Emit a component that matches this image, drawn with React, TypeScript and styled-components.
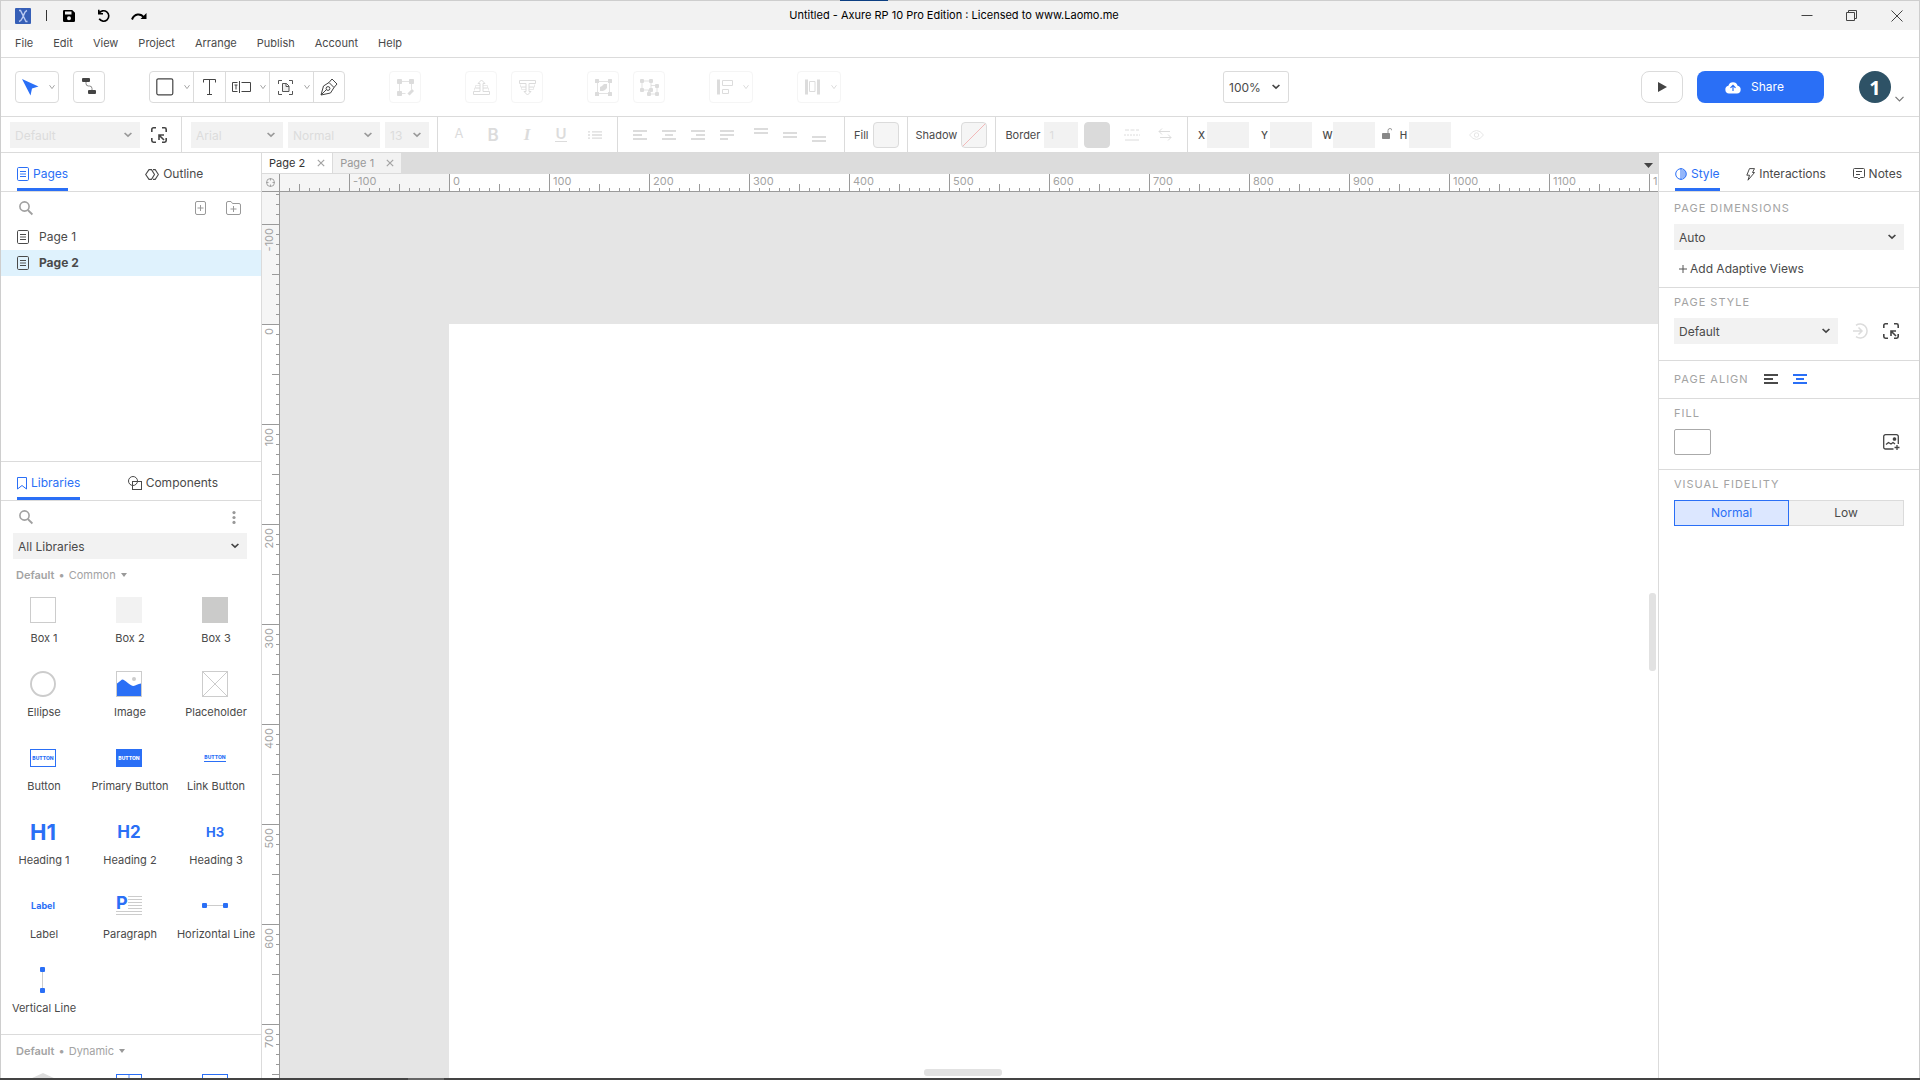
import React, { useEffect, useState } from "react";
import styled, { createGlobalStyle, css } from "styled-components";

const c = {
  text: "#4a4a4a",
  muted: "#a3a3a3",
  faint: "#dcdcdc",
  line: "#dbdbdb",
  field: "#f2f2f2",
  blue: "#2a6ff6",
  tick: "#9a9a9a",
};

const GlobalStyle = createGlobalStyle`
  *, *::before, *::after { box-sizing: border-box; }
  html, body, #root { height: 100%; margin: 0; }
  body { font-family: Inter, "Liberation Sans", sans-serif; font-size: 12px; line-height: 16px; color: ${c.text}; background: #fff; overflow: hidden; }
  button, input, select { font: inherit; color: inherit; margin: 0; padding: 0; border: 0; background: none; border-radius: 0; }
  svg { display: block; flex: none; }
`;

/* ---------- window frame ---------- */

const Window = styled.div`
  display: flex;
  flex-direction: column;
  height: 100vh;
`;
const TopEdge = styled.div`
  display: flex;
  justify-content: center;
  flex: none;
  height: 1px;
  background: #cecece;
`;
const TopMark = styled.span`
  width: 48px;
  margin-right: 192px;
  background: #0c3f83;
`;
const Frame = styled.div`
  display: flex;
  flex-direction: column;
  flex: 1;
  min-height: 0;
  border: solid #cecece;
  border-width: 0 1px;
`;
const BottomEdge = styled.div`
  flex: none;
  height: 2px;
  padding-left: 408px;
  background: #444;
`;
const BottomMark = styled.div`
  width: 36px;
  height: 2px;
  background: #666;
`;

const TitleBar = styled.header`
  display: grid;
  grid-template-columns: 1fr auto 1fr;
  align-items: center;
  flex: none;
  height: 29px;
  padding: 0 16px 0 4px;
  background: #f2f2f2;
`;
const QuickActions = styled.div`
  display: flex;
  align-items: center;
  padding-left: 10px;
`;
const QuickDivider = styled.span`
  width: 1px;
  height: 11px;
  margin: 0 16px 0 15px;
  background: #333;
`;
const QuickButton = styled.button`
  display: grid;
  place-items: center;
  width: 12px;
  height: 16px;
  margin-right: 22px;
  color: #000;
`;
const WindowTitle = styled.h1`
  margin: 0;
  padding-bottom: 2px;
  font-size: 11px;
  font-weight: 400;
  color: #000;
`;
const WindowControls = styled.div`
  display: flex;
  justify-content: flex-end;
  gap: 33px;
`;
const WindowButton = styled.button`
  width: 12px;
  height: 12px;
  color: #444;
`;

const MenuBar = styled.nav`
  display: flex;
  align-items: center;
  gap: 20px;
  flex: none;
  height: 28px;
  padding: 0 14px 2px;
  border-bottom: 1px solid ${c.line};
`;
const MenuItem = styled.button`
  font-size: 11px;
`;

/* ---------- main toolbar ---------- */

const Toolbar = styled.div`
  display: flex;
  align-items: center;
  flex: none;
  height: 59px;
  padding: 0 15px 0 14px;
  border-bottom: 1px solid ${c.line};
`;
const ToolSet = styled.div`
  display: flex;
  gap: 14px;
  margin-right: 44px;
`;
const ToolButton = styled.button<{ $caret?: boolean; $off?: boolean }>`
  display: flex;
  align-items: center;
  justify-content: ${(p) => (p.$caret ? "space-between" : "center")};
  width: ${(p) => (p.$caret ? 44 : 32)}px;
  height: 32px;
  padding: ${(p) => (p.$caret ? "0 3px 0 6px" : "0")};
  border: 1px solid ${(p) => (p.$off ? "#f5f5f5" : c.line)};
  border-radius: 4px;
  color: ${(p) => (p.$off ? c.faint : c.text)};
`;
const JoinedTools = styled.div`
  display: flex;
  border: 1px solid ${c.line};
  border-radius: 4px;
  ${ToolButton} {
    height: 30px;
    border-width: 0 0 0 1px;
    border-radius: 0;
  }
  ${ToolButton}:first-child {
    width: 43px;
    border-left: 0;
  }
  ${ToolButton}:last-child {
    width: 31px;
  }
`;
const ZoomSlot = styled.div`
  margin: 0 auto;
  padding-right: 14px;
`;
const PlayButton = styled.button`
  display: grid;
  place-items: center;
  width: 42px;
  height: 32px;
  margin-right: 14px;
  border: 1px solid ${c.line};
  border-radius: 8px;
`;
const ShareButton = styled.button`
  display: flex;
  align-items: center;
  justify-content: center;
  gap: 10px;
  width: 127px;
  height: 32px;
  margin-right: 35px;
  padding-right: 12px;
  border-radius: 8px;
  background: ${c.blue};
  color: #fff;
  font-size: 12px;
`;
const Account = styled.button`
  display: flex;
  align-items: center;
  gap: 4px;
  svg {
    align-self: flex-end;
    margin-bottom: 1px;
  }
`;
const Avatar = styled.span`
  display: grid;
  place-items: center;
  width: 32px;
  height: 32px;
  border-radius: 50%;
  background: #2e5266;
  color: #fff;
  font: 700 20px "Noto Sans", sans-serif;
`;

/* ---------- fields ---------- */

const SelectBox = styled.span<{ $w: string; $off?: boolean; $outlined?: boolean }>`
  display: inline-grid;
  align-items: center;
  flex: none;
  width: ${(p) => p.$w};
  height: ${(p) => (p.$outlined ? 32 : 26)}px;
  border: ${(p) => (p.$outlined ? `1px solid ${c.line}` : "0")};
  border-radius: ${(p) => (p.$outlined ? 3 : 0)}px;
  background: ${(p) => (p.$outlined ? "#fff" : c.field)};
  select {
    grid-area: 1 / 1;
    width: 100%;
    height: 100%;
    padding: 2px 24px 0 5px;
    appearance: none;
    opacity: 1;
    font-size: 12px;
    color: ${(p) => (p.$off ? c.faint : c.text)};
  }
  svg {
    grid-area: 1 / 1;
    justify-self: end;
    margin-right: 8px;
    pointer-events: none;
    color: ${(p) => (p.$off ? "#999" : "#444")};
  }
`;

function Select(p: { label: string; value: string; w: string; off?: boolean; outlined?: boolean }) {
  return (
    <SelectBox $w={p.w} $off={p.off} $outlined={p.outlined}>
      <select aria-label={p.label} disabled={p.off} defaultValue={p.value}>
        <option>{p.value}</option>
      </select>
      <svg width="8" height="6" viewBox="0 0 8 6" fill="none" stroke="currentColor" strokeWidth="1.7">
        <path d="M.6 1 4 4.2 7.4 1" />
      </svg>
    </SelectBox>
  );
}

/* ---------- format bar ---------- */

const FormatBar = styled.div`
  display: flex;
  flex: none;
  height: 36px;
  border-bottom: 1px solid ${c.line};
`;
const Group = styled.div<{ $pad: string; $gap?: number; $last?: boolean }>`
  display: flex;
  align-items: center;
  gap: ${(p) => p.$gap ?? 0}px;
  padding: ${(p) => p.$pad};
  border-right: ${(p) => (p.$last ? 0 : 1)}px solid ${c.line};
`;
const FormatButton = styled.button<{ $w: number }>`
  display: grid;
  place-items: center;
  width: ${(p) => p.$w}px;
  height: 26px;
  color: ${c.faint};
`;
const Spacer = styled.span<{ $w: number }>`
  flex: none;
  width: ${(p) => p.$w}px;
`;
const Glyph = styled.span<{ $kind: "b" | "i" | "u" | "a" }>`
  font-size: ${(p) => (p.$kind === "a" ? 13 : 17)}px;
  line-height: 18px;
  ${(p) => p.$kind === "a" && css`padding-bottom: 3px;`}
  ${(p) => p.$kind === "b" && css`font-weight: 600;`}
  ${(p) => p.$kind === "i" && css`font-family: "Liberation Serif", serif; font-style: italic; font-weight: 700;`}
  ${(p) => p.$kind === "u" && css`font-size: 15px; font-weight: 600; line-height: 13px; border-bottom: 1px solid currentColor; padding-bottom: 1px;`}
`;
const SmallLabel = styled.label`
  display: flex;
  align-items: center;
  gap: 4px;
  font-size: 11px;
`;
const Swatch = styled.button<{ $w?: number; $fill: string; $edge?: string; $r?: number }>`
  display: block;
  width: ${(p) => p.$w ?? 26}px;
  height: 26px;
  border: 1px solid ${(p) => p.$edge ?? c.line};
  border-radius: ${(p) => p.$r ?? 4}px;
  background: ${(p) => p.$fill};
`;
const NumberInput = styled.input<{ $w: number }>`
  width: ${(p) => p.$w}px;
  height: 26px;
  padding: 0 5px;
  background: ${c.field};
  &::placeholder { color: ${c.faint}; opacity: 1; }
`;
const AxisField = styled.label`
  display: grid;
  grid-template-columns: 12px 42px;
  align-items: center;
  font-size: 10px;
  font-weight: 500;
  text-align: center;
`;

/* ---------- side panels ---------- */

const Body = styled.div`
  display: flex;
  flex: 1;
  min-height: 0;
`;
const Sidebar = styled.aside<{ $side: "left" | "right" }>`
  display: flex;
  flex-direction: column;
  flex: none;
  width: 261px;
  border: 0 solid ${c.line};
  border-${(p) => (p.$side === "left" ? "right" : "left")}-width: 1px;
`;
const PagesPane = styled.section`
  height: 309px;
  border-bottom: 1px solid ${c.line};
`;
const LibraryPane = styled.section`
  flex: 1;
  min-height: 0;
  overflow: hidden;
`;
const TabRow = styled.div<{ $spread?: boolean }>`
  display: grid;
  grid-template-columns: ${(p) => (p.$spread ? "auto auto auto" : "1fr 1fr")};
  justify-content: ${(p) => (p.$spread ? "space-between" : "stretch")};
  height: 39px;
  padding: 0 17px 0 16px;
  border-bottom: 1px solid ${c.line};
`;
const PanelTab = styled.button<{ $on?: boolean; $center?: boolean }>`
  display: flex;
  align-items: center;
  gap: 4px;
  justify-self: ${(p) => (p.$center ? "center" : "start")};
  height: 38px;
  margin-right: ${(p) => (p.$center ? 26 : 0)}px;
  padding-top: 7px;
  border-bottom: 3px solid ${(p) => (p.$on ? c.blue : "transparent")};
  color: ${(p) => (p.$on ? c.blue : c.text)};
  font-size: 12px;
`;
const SearchRow = styled.div`
  display: flex;
  align-items: center;
  height: 32px;
  padding: 0 19px 0 17px;
  color: ${c.muted};
`;
const SearchInput = styled.input`
  flex: 1;
  min-width: 0;
  padding: 0 8px;
  outline: 0;
`;
const IconButton = styled.button<{ $w?: number }>`
  display: grid;
  place-items: center;
  width: ${(p) => p.$w ?? 16}px;
  height: 26px;
`;
const PageCenter = styled(IconButton)`
  color: ${c.blue};
`;
const PageList = styled.ul`
  margin: 0;
  padding: 0;
  list-style: none;
`;
const PageRow = styled.button<{ $on?: boolean }>`
  display: flex;
  align-items: center;
  gap: 10px;
  width: 100%;
  height: 26px;
  padding: 0 16px;
  background: ${(p) => (p.$on ? "#dff2fd" : "transparent")};
  font-weight: ${(p) => (p.$on ? 700 : 400)};
`;
const LibrarySelect = styled.div`
  padding: 0 14px 0 12px;
`;
const LibrarySection = styled.section`
  border-bottom: 1px solid ${c.line};
`;
const LibraryHeading = styled.button`
  display: flex;
  align-items: center;
  gap: 4px;
  height: 31px;
  padding: 0 15px;
  color: ${c.muted};
  font-size: 11px;
  b { font-weight: 600; }
  svg { margin-left: 1px; }
`;
const WidgetGrid = styled.div`
  display: grid;
  grid-template-columns: repeat(3, 86px);
`;
const Widget = styled.button`
  display: flex;
  flex-direction: column;
  align-items: center;
  gap: 7px;
  height: 74px;
  padding-top: 7px;
  font-size: 11px;
  white-space: nowrap;
`;
const WidgetIcon = styled.span`
  display: grid;
  place-items: center;
  width: 26px;
  height: 26px;
  margin-right: 2px;
  color: ${c.blue};
`;
const HeadingGlyph = styled.span<{ $size: number }>`
  font-size: ${(p) => p.$size}px;
  font-weight: 700;
  line-height: 26px;
`;
const ButtonGlyph = styled.span<{ $kind: "outline" | "solid" | "link" }>`
  display: grid;
  place-items: center;
  font-size: 5px;
  font-weight: 800;
  line-height: 6px;
  ${(p) =>
    p.$kind === "link"
      ? css`border-bottom: 1px solid ${c.blue}; padding-bottom: 1px;`
      : css`width: 26px; height: 18px; border: 1px solid ${c.blue};`}
  ${(p) => p.$kind === "solid" && css`background: ${c.blue}; color: #fff;`}
`;
const ParagraphGlyph = styled.span`
  display: grid;
  width: 26px;
  height: 26px;
  b { grid-area: 1 / 1; font-size: 18px; line-height: 20px; text-align: left; }
  svg { grid-area: 1 / 1; }
`;

/* ---------- inspector ---------- */

const Section = styled.section<{ $pad: string }>`
  padding: ${(p) => p.$pad};
  border-bottom: 1px solid ${c.line};
  &:last-child { border-bottom: 0; }
`;
const SectionTitle = styled.h2<{ $inline?: boolean }>`
  margin: 0 0 ${(p) => (p.$inline ? 0 : 8)}px;
  color: ${c.muted};
  font-size: 11px;
  font-weight: 400;
  line-height: 16px;
  letter-spacing: 1px;
`;
const Row = styled.div<{ $gap?: number; $spread?: boolean }>`
  display: flex;
  align-items: center;
  gap: ${(p) => p.$gap ?? 0}px;
  justify-content: ${(p) => (p.$spread ? "space-between" : "flex-start")};
`;
const AddViews = styled.button`
  display: flex;
  align-items: center;
  gap: 3px;
  height: 26px;
  margin-top: 6px;
  padding-left: 5px;
`;
const Segments = styled.div`
  display: grid;
  grid-template-columns: 1fr 1fr;
`;
const Segment = styled.button<{ $on?: boolean }>`
  height: 26px;
  border: 1px solid ${(p) => (p.$on ? c.blue : c.line)};
  border-left-width: ${(p) => (p.$on ? 1 : 0)}px;
  background: ${(p) => (p.$on ? "#dce7ff" : c.field)};
  color: ${(p) => (p.$on ? c.blue : c.text)};
`;

/* ---------- canvas ---------- */

const Workspace = styled.main`
  display: flex;
  flex-direction: column;
  flex: 1;
  min-width: 0;
`;
const DocTabs = styled.div`
  display: flex;
  flex: none;
  height: 21px;
  background: #dcdcdc;
`;
const DocTab = styled.div<{ $on?: boolean }>`
  display: flex;
  align-items: center;
  gap: 12px;
  padding: 0 7px;
  border: solid ${c.line};
  border-width: 0 ${(p) => (p.$on ? 1 : 0)}px 1px 0;
  background: ${(p) => (p.$on ? "#fff" : "#f2f2f2")};
  color: ${(p) => (p.$on ? "#333" : "#999")};
  font-size: 11px;
  line-height: 14px;
`;
const CloseTab = styled.button`
  color: ${c.muted};
`;
const TabMenu = styled.button`
  display: flex;
  margin-left: auto;
  padding: 10px 5px 0;
`;
const RulerRow = styled.div`
  display: flex;
  flex: none;
  height: 18px;
`;
const Corner = styled.button`
  display: grid;
  place-items: center;
  flex: none;
  width: 18px;
  border: solid ${c.tick};
  border-width: 0 1px 1px 0;
  background: #f5f5f5;
  color: ${c.muted};
`;
const RulerX = styled.div`
  display: flex;
  flex: 1;
  min-width: 0;
  overflow: hidden;
  border-bottom: 1px solid ${c.tick};
`;
const RulerY = styled.div`
  flex: none;
  width: 18px;
  overflow: hidden;
  border-right: 1px solid ${c.tick};
`;
const TrackX = styled.div`
  display: flex;
  margin-left: -31px;
`;
const TrackY = styled.div`
  margin-top: -68px;
`;
const MarkX = styled.span<{ $neg: boolean }>`
  flex: none;
  width: 100px;
  height: 17px;
  padding-left: 3px;
  border-left: 1px solid ${c.tick};
  color: ${c.muted};
  font-size: 11px;
  line-height: 14px;
  background:
    linear-gradient(${c.tick}, ${c.tick}) 49px 100% / 1px 7px no-repeat,
    repeating-linear-gradient(to right, transparent 0 9px, ${c.tick} 9px 10px) 0 100% / 99px 3px no-repeat,
    ${(p) => (p.$neg ? "#f5f5f5" : "#fff")};
`;
const MarkY = styled.span<{ $neg: boolean }>`
  display: flex;
  align-items: flex-start;
  justify-content: flex-start;
  height: 100px;
  padding-top: 3px;
  border-top: 1px solid ${c.tick};
  color: ${c.muted};
  font-size: 11px;
  line-height: 14px;
  background:
    linear-gradient(${c.tick}, ${c.tick}) 100% 49px / 7px 1px no-repeat,
    repeating-linear-gradient(to bottom, transparent 0 9px, ${c.tick} 9px 10px) 100% 0 / 3px 99px no-repeat,
    ${(p) => (p.$neg ? "#f5f5f5" : "#fff")};
`;
const Upward = styled.span`
  writing-mode: vertical-rl;
  transform: rotate(180deg);
`;
const CanvasRow = styled.div`
  display: flex;
  flex: 1;
  min-height: 0;
`;
const Canvas = styled.div`
  position: relative;
  flex: 1;
  display: flex;
  min-width: 0;
  padding: 132px 0 0 169px;
  background: #e5e5e5;
`;
const Artboard = styled.div`
  flex: 1;
  background: #fff;
`;
const Thumb = styled.span<{ $axis: "x" | "y" }>`
  position: absolute;
  border-radius: 3px;
  background: #e2e2e2;
  ${(p) =>
    p.$axis === "y"
      ? css`top: 401px; right: 2px; width: 7px; height: 78px;`
      : css`left: 644px; bottom: 2px; width: 78px; height: 7px;`}
`;

/* ---------- drawings ---------- */

const Caret = () => (
  <svg width="6" height="6" viewBox="0 0 6 6" fill="none" stroke="#a5a5a5" strokeWidth="1">
    <path d="M.5 1.2 3 4.6 5.5 1.2" />
  </svg>
);
const FaintCaret = () => (
  <svg width="6" height="6" viewBox="0 0 6 6" fill="none" stroke="currentColor" strokeWidth="1">
    <path d="M.5 1.2 3 4.6 5.5 1.2" />
  </svg>
);
const Triangle = ({ w, h, fill }: { w: number; h: number; fill: string }) => (
  <svg width={w} height={h} viewBox="0 0 8 5" preserveAspectRatio="none" fill={fill}>
    <path d="M0 0h8L4 5z" />
  </svg>
);
const PageIcon = () => (
  <svg width="12" height="14" viewBox="0 0 12 14" fill="none" stroke="currentColor">
    <rect x=".5" y=".5" width="11" height="13" rx="1.2" />
    <path d="M3 4.5h6M3 9.5h6" />
    <path d="M3 7h6" strokeWidth="1.4" opacity=".65" />
  </svg>
);
const SearchIcon = () => (
  <svg width="16" height="16" viewBox="0 0 16 16" fill="none" stroke="#a0a0a0">
    <circle cx="6.500" cy="6.500" r="4.6" strokeWidth="1.6" />
    <path d="m9.800 10 4.600 4.500" strokeWidth="1.8" />
  </svg>
);
const PickIcon = () => (
  <svg width="16" height="16" viewBox="0 0 16 16" fill="none" stroke="#444" strokeWidth="1.6">
    <path d="M.8 5V2.4A1.6 1.6 0 0 1 2.4.8H5M11 .8h2.6a1.6 1.6 0 0 1 1.6 1.6V5M15.200 11v2.600a1.600 1.600 0 0 1-1.600 1.600H11M5 15.200H2.400a1.600 1.600 0 0 1-1.600-1.600V11" />
    <path d="M8 13V8h5M8.200 8.200l4.800 4.800" />
  </svg>
);
const LinesIcon = ({ lines }: { lines: [number, number, number][] }) => (
  <svg width="14" height="14" viewBox="0 0 14 14" fill="currentColor">
    {lines.map(([x, y, w]) => (
      <rect key={y} x={x} y={y} width={w} height="2" />
    ))}
  </svg>
);

const aligns: { name: string; lines: [number, number, number][] }[] = [
  { name: "Align left", lines: [[0, 2, 14], [0, 6, 9], [0, 10, 14]] },
  { name: "Align center", lines: [[0, 2, 14], [3, 6, 8], [0, 10, 14]] },
  { name: "Align right", lines: [[0, 2, 14], [5, 6, 9], [0, 10, 14]] },
  { name: "Justify", lines: [[0, 2, 14], [0, 6, 14], [0, 10, 8]] },
];
const valigns: { name: string; lines: [number, number, number][] }[] = [
  { name: "Align top", lines: [[0, 0, 14], [0, 4, 14]] },
  { name: "Align middle", lines: [[0, 4, 14], [0, 8, 14]] },
  { name: "Align bottom", lines: [[0, 8, 14], [0, 12, 14]] },
];

const Raise = ({ flip }: { flip?: boolean }) => (
  <svg width="17" height="17" viewBox="0 0 17 17" fill="none" stroke="currentColor">
    <g transform={flip ? "translate(0 17) scale(1 -1)" : undefined}>
      <path d="M.5 15.500v-3h6.500V4.500H5L8.500 1 12 4.500h-2v8h6.500v3z" />
      <path d="M7 6.500H2.500v2.500H7M10 6.500h4.500v2.500H10M7 9H1.500v2.500M10 9h5.500v2.500" opacity=".6" />
    </g>
  </svg>
);

const widgets: { name: string; icon: React.ReactNode }[] = [
  { name: "Box 1", icon: <svg width="26" height="26"><rect x=".5" y=".5" width="25" height="25" fill="#fff" stroke="#ccc" /></svg> },
  { name: "Box 2", icon: <svg width="26" height="26"><rect width="26" height="26" fill="#f2f2f2" /></svg> },
  { name: "Box 3", icon: <svg width="26" height="26"><rect width="26" height="26" fill="#cbcbca" /></svg> },
  { name: "Ellipse", icon: <svg width="26" height="26"><circle cx="13" cy="13" r="12" fill="#fff" stroke="#ccc" strokeWidth="1.900" /></svg> },
  {
    name: "Image",
    icon: (
      <svg width="26" height="26">
        <rect x=".5" y=".5" width="25" height="25" fill="#fff" stroke="#ccc" />
        <circle cx="18" cy="8" r="2" fill="#ccc" />
        <path d="M1 12.500C4 10.500 5.500 8.500 6.500 8.500c2 0 8 6.500 11 6.500 2 0 4.500-2.500 7.500-2.500V25H1z" fill={c.blue} />
      </svg>
    ),
  },
  {
    name: "Placeholder",
    icon: (
      <svg width="26" height="26" fill="none" stroke="#ccc">
        <rect x=".5" y=".5" width="25" height="25" />
        <path d="m1 1 24 24M25 1 1 25" />
      </svg>
    ),
  },
  { name: "Button", icon: <ButtonGlyph $kind="outline">BUTTON</ButtonGlyph> },
  { name: "Primary Button", icon: <ButtonGlyph $kind="solid">BUTTON</ButtonGlyph> },
  { name: "Link Button", icon: <ButtonGlyph $kind="link">BUTTON</ButtonGlyph> },
  { name: "Heading 1", icon: <HeadingGlyph $size={22}>H1</HeadingGlyph> },
  { name: "Heading 2", icon: <HeadingGlyph $size={17}>H2</HeadingGlyph> },
  { name: "Heading 3", icon: <HeadingGlyph $size={13}>H3</HeadingGlyph> },
  { name: "Label", icon: <HeadingGlyph $size={9}>Label</HeadingGlyph> },
  {
    name: "Paragraph",
    icon: (
      <ParagraphGlyph>
        <b>P</b>
        <svg width="26" height="26" stroke="#ccc"><path d="M12 3.500h14M12 6.500h14M12 9.500h14M12 12.500h14M12 15.500h14M0 18.500h26M0 21.500h26" /></svg>
      </ParagraphGlyph>
    ),
  },
  {
    name: "Horizontal Line",
    icon: (
      <svg width="26" height="26" fill={c.blue}>
        <path d="M3 12.500h20" stroke="#ccc" />
        <rect y="10" width="5" height="5" rx="1" /><rect x="21" y="10" width="5" height="5" rx="1" />
      </svg>
    ),
  },
  {
    name: "Vertical Line",
    icon: (
      <svg width="26" height="26" fill={c.blue}>
        <path d="M12.500 3v20" stroke="#ccc" />
        <rect x="10" width="5" height="5" rx="1" /><rect x="10" y="21" width="5" height="5" rx="1" />
      </svg>
    ),
  },
];

const dynamicWidgets: { name: string; icon: React.ReactNode }[] = [
  { name: "Dynamic Panel", icon: <svg width="26" height="26"><path d="M13 0 26 6 13 12 0 6z" fill="#ddd" /></svg> },
  { name: "Inline Frame", icon: <svg width="26" height="26" fill="none" stroke={c.blue}><rect x=".5" y="1.500" width="25" height="24" /><path d="M13 2v23" stroke="#a9c4fb" strokeWidth="2" /></svg> },
  { name: "Repeater", icon: <svg width="26" height="26" fill="none" stroke={c.blue}><rect x=".5" y="1.500" width="25" height="24" /></svg> },
];

/* Ruler marks from -200 up to the last one that fits in the given length. */
const marksFor = (length: number) => Array.from({ length: Math.max(0, Math.floor(length / 100)) + 3 }, (_, i) => (i - 2) * 100);
const markLabel = (m: number) => (m < -100 ? "" : m);

function useWindowSize() {
  const [size, setSize] = useState({ w: window.innerWidth, h: window.innerHeight });
  useEffect(() => {
    const update = () => setSize({ w: window.innerWidth, h: window.innerHeight });
    window.addEventListener("resize", update);
    return () => window.removeEventListener("resize", update);
  }, []);
  return size;
}

export default function App() {
  const size = useWindowSize();
  return (
    <Window>
      <GlobalStyle />
      <TopEdge><TopMark /></TopEdge>
      <Frame>
        <TitleBar>
          <QuickActions>
            <svg width="16" height="16" viewBox="0 0 16 16" fill="none">
              <rect width="16" height="16" rx="1" fill="#365fb7" />
              <path d="M4 2.500h1.500l5.500 11h1.500M12 2.500C9 3.500 9.500 6 8.300 8S7 12.500 4 13.500" stroke="#b9caf2" strokeWidth="1.400" />
            </svg>
            <QuickDivider />
            <QuickButton aria-label="Save">
              <svg width="12" height="12" viewBox="0 0 12 12" fillRule="evenodd"><path d="M1.200 0h8L12 2.800v8A1.200 1.200 0 0 1 10.800 12H1.200A1.200 1.200 0 0 1 0 10.800V1.200A1.200 1.200 0 0 1 1.200 0zM2 1.600v2.800h6.500V1.600zM6 6.200a2 2 0 1 0 0 4 2 2 0 0 0 0-4z" /></svg>
            </QuickButton>
            <QuickButton aria-label="Undo">
              <svg width="14" height="14" viewBox="0 0 14 14" fill="none" stroke="#000" strokeWidth="1.600"><path d="M2 4.500A5.200 5.200 0 1 1 2.200 9.800M1.800.8v4h4.200" /></svg>
            </QuickButton>
            <QuickButton aria-label="Redo">
              <svg width="16" height="12" viewBox="0 0 16 12" fill="none" stroke="#000" strokeWidth="2"><path d="M1 9.500C3.500 3.500 9.500 3 13 7.500" /><path d="M15.500 3v6h-6z" fill="#000" stroke="none" /></svg>
            </QuickButton>
          </QuickActions>
          <WindowTitle>Untitled - Axure RP 10 Pro Edition : Licensed to www.Laomo.me</WindowTitle>
          <WindowControls>
            <WindowButton aria-label="Minimize"><svg width="12" height="12" stroke="currentColor"><path d="M.5 5.500h11" /></svg></WindowButton>
            <WindowButton aria-label="Restore"><svg width="12" height="12" fill="none" stroke="currentColor"><path d="M.5 2.500h8v8h-8zM2.500 2.500v-2h8v8h-2" /></svg></WindowButton>
            <WindowButton aria-label="Close"><svg width="12" height="12" stroke="currentColor"><path d="m.5.5 11 11M11.500.5l-11 11" /></svg></WindowButton>
          </WindowControls>
        </TitleBar>

        <MenuBar>
          {["File", "Edit", "View", "Project", "Arrange", "Publish", "Account", "Help"].map((m) => <MenuItem key={m}>{m}</MenuItem>)}
        </MenuBar>

        <Toolbar>
          <ToolSet>
            <ToolButton $caret aria-label="Select">
              <svg width="17" height="17" viewBox="0 0 17 17" fill={c.blue}><path d="M0 0 16.500 7.500 10 9.500 8.500 16.500z" /></svg><Caret />
            </ToolButton>
            <ToolButton aria-label="Connect">
              <svg width="16" height="18" viewBox="0 0 16 18" fill="#444"><rect x="1" y="0" width="8" height="4" rx="1" /><rect x="7" y="12" width="8" height="4" rx="1" /><path d="M5 4v1.500A2.500 2.500 0 0 0 7.500 8h1A2.500 2.500 0 0 1 11 10.500V12" fill="none" stroke="#888" /></svg>
            </ToolButton>
          </ToolSet>
          <ToolSet>
            <JoinedTools>
              <ToolButton $caret aria-label="Rectangle">
                <svg width="18" height="18" fill="none" stroke="#444" strokeWidth="1.200"><rect x=".8" y=".8" width="16" height="16" rx="1.500" /></svg><Caret />
              </ToolButton>
              <ToolButton aria-label="Text">
                <svg width="14" height="16" fill="none" stroke="#444"><path d="M.5 3.500v-3h12v3M6.500.5v15M4 15.500h5" /></svg>
              </ToolButton>
              <ToolButton $caret aria-label="Input">
                <svg width="20" height="12" fill="none" stroke="#444"><path d="M5.500 1.500h-5v9h5M9.500 1.500h9v9h-9M7.500 0v12M2.500 4h3M4 4v4.500" /></svg><Caret />
              </ToolButton>
              <ToolButton $caret aria-label="Dynamic">
                <svg width="17" height="15" fill="none" stroke="#555"><path d="M2.500 4V.5H6M13 .5h3.500V4M16.500 11v3.500H13M6 14.500H2.500V11" /><path d="M6.500 3.500h4l2.500 2.500v5.500H6.500zM10 3.500v3h3" fill="#eee" /></svg><Caret />
              </ToolButton>
              <ToolButton aria-label="Pen">
                <svg width="18" height="18" viewBox="0 0 18 18" fill="none" stroke="#444"><path d="M1 17 3.500 8l5.500-3.500 5 5L10.500 15zM1 17l5.500-5.500M9 4.500 12 1l5 5-3 3.500" /><circle cx="8" cy="10.500" r="1.900" /></svg>
              </ToolButton>
            </JoinedTools>
          </ToolSet>
          <ToolSet>
            <ToolButton $off disabled aria-label="Edit points">
              <svg width="17" height="17" fill="currentColor"><path d="M2.500 2.500h12v8M2.500 2.500v12h6" fill="none" stroke="currentColor" strokeWidth=".8" /><rect width="5" height="5" rx=".8" /><rect x="12" width="5" height="5" rx=".8" /><rect y="12" width="5" height="5" rx=".8" /><path d="M11.500 15.500 16 11" stroke="currentColor" strokeWidth="3" /></svg>
            </ToolButton>
          </ToolSet>
          <ToolSet>
            <ToolButton $off disabled aria-label="Bring to front"><Raise /></ToolButton>
            <ToolButton $off disabled aria-label="Send to back"><Raise flip /></ToolButton>
          </ToolSet>
          <ToolSet>
            <ToolButton $off disabled aria-label="Group">
              <svg width="17" height="17" fill="currentColor"><rect x="2.500" y="2.500" width="12" height="12" fill="none" stroke="currentColor" strokeWidth=".8" /><rect width="4" height="4" rx=".5" /><rect x="13" width="4" height="4" rx=".5" /><rect y="13" width="4" height="4" rx=".5" /><rect x="13" y="13" width="4" height="4" rx=".5" /><path d="M5 8l2-1 2-2h3v4l-2 2-2 1H5z" /></svg>
            </ToolButton>
            <ToolButton $off disabled aria-label="Ungroup">
              <svg width="19" height="17" fill="currentColor"><path d="M2 2h9v9H2zM11 6.500h6V15H8.500v-4" fill="none" stroke="currentColor" strokeWidth=".8" />{[[0, 0], [9, 0], [0, 9], [9, 9], [15, 5], [15, 13], [7, 13]].map(([x, y]) => <rect key={`${x}-${y}`} x={x} y={y} width="4" height="4" rx="1" />)}</svg>
            </ToolButton>
          </ToolSet>
          <ToolSet>
            <ToolButton $off $caret disabled aria-label="Align">
              <svg width="18" height="16" fill="none" stroke="currentColor"><path d="M2.500.5v15" strokeWidth="3" /><path d="M6.500 1.500h10v5h-10zM6.500 10.500h6v4h-6z" /></svg><FaintCaret />
            </ToolButton>
          </ToolSet>
          <ToolSet>
            <ToolButton $off $caret disabled aria-label="Distribute">
              <svg width="17" height="16" fill="none" stroke="currentColor"><path d="M2.500.5v15M14.500.5v15" strokeWidth="3" /><path d="M5.500 2.500h5.500v10H5.500z" /></svg><FaintCaret />
            </ToolButton>
          </ToolSet>
          <ZoomSlot><Select label="Zoom" value="100%" w="66px" outlined /></ZoomSlot>
          <PlayButton aria-label="Preview"><svg width="9" height="10" fill="#444"><path d="M0 0 9 5 0 10z" /></svg></PlayButton>
          <ShareButton>
            <svg width="16" height="13" viewBox="0 0 16 13"><path d="M4 12.500a3.900 3.900 0 0 1-.6-7.700 4.800 4.800 0 0 1 9.200 0A3.900 3.900 0 0 1 12 12.500z" fill="#fff" /><path d="M8 10V4.500M5.500 6.800 8 4.300l2.500 2.500" fill="none" stroke={c.blue} strokeWidth="1.200" /></svg>
            Share
          </ShareButton>
          <Account aria-label="Account">
            <Avatar>1</Avatar>
            <svg width="9" height="6" fill="none" stroke="#777" strokeWidth="1.200"><path d="m.5.8 4 4 4-4" /></svg>
          </Account>
        </Toolbar>

        <FormatBar>
          <Group $pad="0 14px 0 9px" $gap={11}>
            <Select label="Widget style" value="Default" w="130px" off />
            <IconButton aria-label="Style painter"><PickIcon /></IconButton>
          </Group>
          <Group $pad="0 8px 0 9px" $gap={5}>
            <Select label="Font" value="Arial" w="92px" off />
            <Select label="Weight" value="Normal" w="92px" off />
            <Select label="Size" value="13" w="44px" off />
          </Group>
          <Group $pad="0 5px 0 4px">
            <FormatButton $w={34} disabled aria-label="Color"><Glyph $kind="a">A</Glyph></FormatButton>
            <FormatButton $w={34} disabled aria-label="Bold"><Glyph $kind="b">B</Glyph></FormatButton>
            <FormatButton $w={34} disabled aria-label="Italic"><Glyph $kind="i">I</Glyph></FormatButton>
            <FormatButton $w={34} disabled aria-label="Underline"><Glyph $kind="u">U</Glyph></FormatButton>
            <FormatButton $w={34} disabled aria-label="Bullets">
              <svg width="14" height="8" fill="none" stroke="currentColor"><path d="M0 .8h2M0 4h2M0 7.200h2M4 .8h10M4 4h10M4 7.200h10" strokeWidth="1.300" /></svg>
            </FormatButton>
          </Group>
          <Group $pad="0 11px 0 7px">
            {aligns.map((a) => <FormatButton key={a.name} $w={29} disabled aria-label={a.name}><LinesIcon lines={a.lines} /></FormatButton>)}
            <Spacer $w={5} />
            {valigns.map((a) => <FormatButton key={a.name} $w={29} disabled aria-label={a.name}><LinesIcon lines={a.lines} /></FormatButton>)}
          </Group>
          <Group $pad="0 8px 0 9px">
            <SmallLabel>Fill <Swatch $fill="#f5f5f5" disabled /></SmallLabel>
          </Group>
          <Group $pad="0 8px 0 8px">
            <SmallLabel>Shadow <Swatch $fill="linear-gradient(to top left, #f5f5f5 49%, #f3b8b8 49% 51%, #f5f5f5 51%)" disabled /></SmallLabel>
          </Group>
          <Group $pad="0 15px 0 9px">
            <SmallLabel>Border <NumberInput $w={34} placeholder="1" disabled /></SmallLabel>
            <Spacer $w={6} />
            <Swatch $fill="#dadada" $edge="#dadada" disabled aria-label="Border color" />
            <Spacer $w={14} />
            <FormatButton $w={16} disabled aria-label="Line style"><svg width="16" height="12" fill="none" stroke="currentColor"><path d="M1 1h14" strokeDasharray="4 1.500" /><path d="M0 6h16" strokeDasharray="2 1" /><path d="M1 11h14" /></svg></FormatButton>
            <Spacer $w={18} />
            <FormatButton $w={14} disabled aria-label="Arrow style"><svg width="14" height="13" fill="none" stroke="currentColor"><path d="M4 .5 1 3.500l3 3M1 3.500h11M10 6.500l3 3-3 3M13 9.500H2" /></svg></FormatButton>
          </Group>
          <Group $pad="0 7px" $gap={9} $last>
            <AxisField>X<NumberInput $w={42} disabled /></AxisField>
            <AxisField>Y<NumberInput $w={42} disabled /></AxisField>
            <AxisField>W<NumberInput $w={42} disabled /></AxisField>
          </Group>
          <Group $pad="0" $gap={5} $last>
            <IconButton $w={10} aria-label="Lock ratio"><svg width="10" height="14" viewBox="0 0 10 14"><rect y="5" width="8" height="6" rx=".8" fill="#888" /><path d="M6 5V2.500a2 2 0 0 1 4 0" fill="none" stroke="#999" /></svg></IconButton>
            <AxisField>H<NumberInput $w={42} disabled /></AxisField>
            <Spacer $w={8} />
            <FormatButton $w={15} disabled aria-label="Visibility"><svg width="15" height="10" fill="none" stroke="#e6e6e6"><path d="M.5 5Q7.500-4 14.500 5 7.500 14 .5 5z" /><circle cx="7.500" cy="5" r="2.200" /></svg></FormatButton>
          </Group>
        </FormatBar>

        <Body>
          <Sidebar $side="left">
            <PagesPane>
              <TabRow>
                <PanelTab $on><PageIcon />Pages</PanelTab>
                <PanelTab $center>
                  <svg width="14" height="11" viewBox="0 0 14 11" fill="none" stroke="currentColor" strokeWidth="1.100"><path d="M4 .6h2.500l3 4.900-3 4.900H4L.7 5.500zM8 .6h2.200l3.200 4.900-3.200 4.900H8" /></svg>
                  Outline
                </PanelTab>
              </TabRow>
              <SearchRow>
                <SearchIcon />
                <SearchInput aria-label="Search pages" />
                <IconButton $w={12} aria-label="Add page"><svg width="12" height="14" fill="none" stroke="#999"><rect x=".5" y=".5" width="10" height="13" rx="1.500" /><path d="M5.500 4v6M2.500 7h6" /></svg></IconButton>
                <Spacer $w={19} />
                <IconButton $w={16} aria-label="Add folder"><svg width="16" height="14" fill="none" stroke="#999"><path d="M.5 12V2A1.500 1.500 0 0 1 2 .5h3l1.500 2H13A1.500 1.500 0 0 1 14.500 4v8a1.500 1.500 0 0 1-1.500 1.500H2A1.500 1.500 0 0 1 .5 12zM7.500 5v6M4.500 8h6" /></svg></IconButton>
              </SearchRow>
              <PageList>
                <li><PageRow><PageIcon />Page 1</PageRow></li>
                <li><PageRow $on><PageIcon />Page 2</PageRow></li>
              </PageList>
            </PagesPane>
            <LibraryPane>
              <TabRow>
                <PanelTab $on><svg width="10" height="13" fill="none" stroke="currentColor"><path d="M.5.5h9v11.500L5 8.500.5 12z" /></svg>Libraries</PanelTab>
                <PanelTab $center>
                  <svg width="14" height="14" fill="none" stroke="currentColor"><circle cx="5" cy="5" r="4.500" /><rect x="4.500" y="5.500" width="9" height="8" /></svg>
                  Components
                </PanelTab>
              </TabRow>
              <SearchRow>
                <SearchIcon />
                <SearchInput aria-label="Search libraries" />
                <IconButton aria-label="Library options"><svg width="4" height="13" fill="#999"><circle cx="2" cy="1.600" r="1.600" /><circle cx="2" cy="6.500" r="1.600" /><circle cx="2" cy="11.400" r="1.600" /></svg></IconButton>
              </SearchRow>
              <LibrarySelect><Select label="Library" value="All Libraries" w="100%" /></LibrarySelect>
              <LibrarySection>
                <LibraryHeading><b>Default</b>•<span>Common</span><Triangle w={6} h={4} fill="#999" /></LibraryHeading>
                <WidgetGrid>
                  {widgets.map((w) => <Widget key={w.name}><WidgetIcon>{w.icon}</WidgetIcon>{w.name}</Widget>)}
                </WidgetGrid>
              </LibrarySection>
              <LibrarySection>
                <LibraryHeading><b>Default</b>•<span>Dynamic</span><Triangle w={6} h={4} fill="#999" /></LibraryHeading>
                <WidgetGrid>
                  {dynamicWidgets.map((w) => <Widget key={w.name} aria-label={w.name}><WidgetIcon>{w.icon}</WidgetIcon></Widget>)}
                </WidgetGrid>
              </LibrarySection>
            </LibraryPane>
          </Sidebar>

          <Workspace>
            <DocTabs>
              {["Page 2", "Page 1"].map((name, i) => (
                <DocTab key={name} $on={i === 0}>
                  {name}
                  <CloseTab aria-label={`Close ${name}`}><svg width="8" height="8" stroke="currentColor" strokeWidth="1.200"><path d="m.8.8 6.400 6.400M7.200.8.8 7.200" /></svg></CloseTab>
                </DocTab>
              ))}
              <TabMenu aria-label="Open tabs"><Triangle w={9} h={5} fill="#444" /></TabMenu>
            </DocTabs>
            <RulerRow>
              <Corner aria-label="Ruler origin"><svg width="9" height="9" fill="none" stroke="currentColor"><circle cx="4.500" cy="4.500" r="4" /><path d="M4.500 0v2.500M4.500 6.500V9M0 4.500h2.500M6.500 4.500H9" /></svg></Corner>
              <RulerX><TrackX>{marksFor(size.w - 711).map((m) => <MarkX key={m} $neg={m < 0}>{markLabel(m)}</MarkX>)}</TrackX></RulerX>
            </RulerRow>
            <CanvasRow>
              <RulerY><TrackY>{marksFor(size.h - 326).map((m) => <MarkY key={m} $neg={m < 0}><Upward>{markLabel(m)}</Upward></MarkY>)}</TrackY></RulerY>
              <Canvas>
                <Artboard />
                <Thumb $axis="y" />
                <Thumb $axis="x" />
              </Canvas>
            </CanvasRow>
          </Workspace>

          <Sidebar $side="right">
            <TabRow $spread>
              <PanelTab $on>
                <svg width="12" height="12" fill="none" stroke="currentColor"><circle cx="6" cy="6" r="5.300" /><path d="M6 0v12M7 3h3M7 5h4M7 7h4M7 9h3" /></svg>
                Style
              </PanelTab>
              <PanelTab>
                <svg width="9" height="13" fill="none" stroke="currentColor"><path d="M3.500.6h5L6.500 4.500h2L2 12.200l1.500-5H.8z" /></svg>
                Interactions
              </PanelTab>
              <PanelTab>
                <svg width="12" height="12" fill="none" stroke="currentColor"><path d="M1.500.5h9a1 1 0 0 1 1 1v7a1 1 0 0 1-1 1H7.500L6 11 4.500 9.500h-3a1 1 0 0 1-1-1v-7a1 1 0 0 1 1-1zM3 3.500h6M3 6.500h4" /></svg>
                Notes
              </PanelTab>
            </TabRow>
            <Section $pad="8px 15px 5px">
              <SectionTitle>PAGE DIMENSIONS</SectionTitle>
              <Select label="Page dimensions" value="Auto" w="100%" />
              <AddViews><svg width="8" height="8" stroke="#555"><path d="M4 0v8M0 4h8" /></svg>Add Adaptive Views</AddViews>
            </Section>
            <Section $pad="6px 15px 16px">
              <SectionTitle>PAGE STYLE</SectionTitle>
              <Row $gap={15}>
                <Select label="Page style" value="Default" w="164px" />
                <IconButton $w={15} aria-label="Update style"><svg width="15" height="16" fill="none" stroke={c.faint} strokeWidth="1.500"><path d="M3 2.300a7 7 0 1 1 0 11.400M0 8h9M5.500 4.500 9 8l-3.500 3.500" /></svg></IconButton>
                <IconButton aria-label="Manage styles"><PickIcon /></IconButton>
              </Row>
            </Section>
            <Section $pad="5px 15px 6px">
              <Row $gap={15}>
                <SectionTitle $inline>PAGE ALIGN</SectionTitle>
                <IconButton $w={14} aria-label="Page left"><LinesIcon lines={aligns[0].lines} /></IconButton>
                <PageCenter $w={14} aria-label="Page center"><LinesIcon lines={aligns[1].lines} /></PageCenter>
              </Row>
            </Section>
            <Section $pad="6px 15px 14px">
              <SectionTitle>FILL</SectionTitle>
              <Row $spread>
                <Swatch $w={37} $fill="#fff" $edge="#aaa" $r={2} aria-label="Page fill" />
                <IconButton $w={26} aria-label="Fill image">
                  <svg width="17" height="17" fill="none" stroke="#444" strokeWidth="1.300"><path d="M10.500 15H2.500A1.800 1.800 0 0 1 .7 13.200V2.500A1.800 1.800 0 0 1 2.500.7h11a1.800 1.800 0 0 1 1.800 1.800V10M3 10.500l2.500-2L8 10l2-1.500 2 1.500M14 11v5M11.500 13.500h5" /><circle cx="11.500" cy="5" r="1.200" fill="#444" /></svg>
                </IconButton>
              </Row>
            </Section>
            <Section $pad="6px 15px">
              <SectionTitle>VISUAL FIDELITY</SectionTitle>
              <Segments>
                <Segment $on>Normal</Segment>
                <Segment>Low</Segment>
              </Segments>
            </Section>
          </Sidebar>
        </Body>
      </Frame>
      <BottomEdge><BottomMark /></BottomEdge>
    </Window>
  );
}
